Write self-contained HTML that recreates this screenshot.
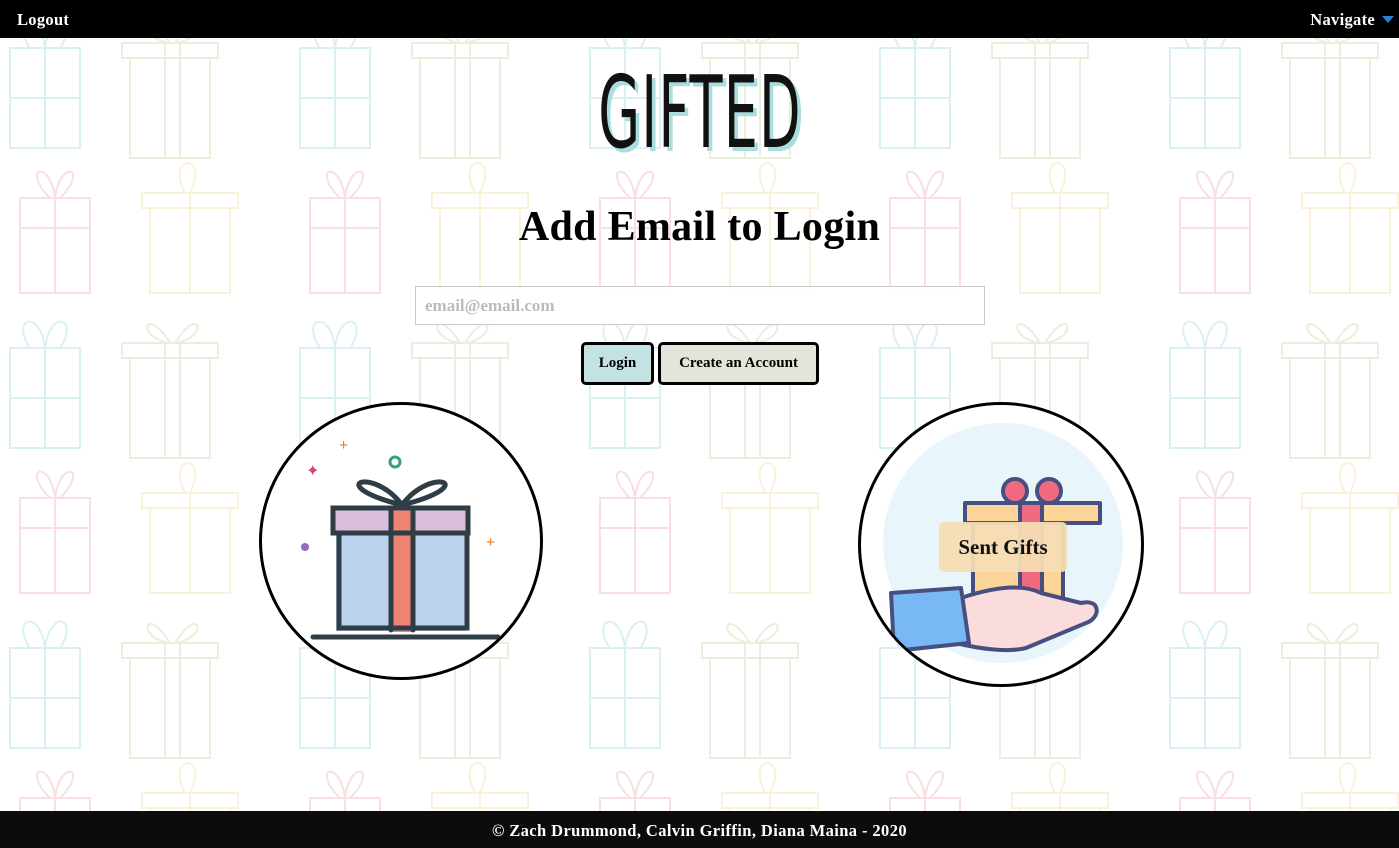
<!DOCTYPE html>
<html><head><meta charset="utf-8"><style>
*{margin:0;padding:0;box-sizing:border-box}
body{width:1399px;height:848px;overflow:hidden;position:relative;background:#fff;font-family:"Liberation Serif",serif}
.bg{position:absolute;left:0;top:38px;width:1399px;height:773px}
.top{position:absolute;left:0;top:0;width:1399px;height:38px;background:#000;color:#fff;font-weight:bold;font-size:16.5px}
.top .l{position:absolute;left:17px;top:10px;letter-spacing:.3px}
.top .r{position:absolute;right:24px;top:10px;letter-spacing:.3px}
.tri{position:absolute;right:5px;top:16px;width:0;height:0;border-left:6px solid transparent;border-right:6px solid transparent;border-top:7px solid #2a7fd4}
.foot{position:absolute;left:0;top:811px;width:1399px;height:37px;background:#0c0c0c;color:#fff;font-weight:bold;font-size:16.5px;text-align:center;padding-top:10px;letter-spacing:.4px}
.logo{position:absolute;left:500px;top:58px;width:400px;text-align:center;font-family:"Liberation Sans Narrow","DejaVu Sans Condensed",sans-serif;font-size:100px;line-height:110px;color:#111;transform:scaleX(.6);letter-spacing:2px;text-shadow:6px 4px 0 #a9dde0}
h1{position:absolute;left:0;width:1399px;top:203px;text-align:center;font-size:42px;font-weight:bold;color:#000;letter-spacing:.3px}
.inp{position:absolute;left:415px;top:286px;width:570px;height:39px;border:1px solid #c9c9c9;background:rgba(255,255,255,.92);color:#bbb;font-size:17px;font-weight:bold;padding:9px 9px}
.btn{position:absolute;top:342px;height:43px;border:3px solid #000;border-radius:5px;font-size:15px;font-weight:bold;text-align:center;padding-top:10px}
.circ{position:absolute;border:3px solid #000;border-radius:50%;background:#fff;overflow:hidden}
</style></head><body>
<svg class="bg" viewBox="0 0 1399 773">
<defs><pattern id="p" width="290" height="300" patternUnits="userSpaceOnUse" x="-10" y="-40">
<g fill="none" stroke-width="2" opacity=".32">
<g stroke="#8fd0dc"><rect x="20" y="50" width="70" height="100"/><path d="M55 50v100M20 100h70M40 50c-20-30 10-40 15 0M70 50c20-30-10-40-15 0"/></g>
<g stroke="#b7cf8f"><rect x="140" y="60" width="80" height="100"/><rect x="132" y="45" width="96" height="15"/><path d="M175 45v115M190 45v115M180 45c-25-40-35-5 0 0M185 45c25-40 35-5 0 0"/></g>
<g stroke="#ec9aa0"><rect x="30" y="200" width="70" height="95"/><path d="M30 230h70M65 200v95M60 200c-30-30 0-40 5 0M70 200c30-30 0-40-5 0"/></g>
<g stroke="#f3d08a"><rect x="160" y="210" width="80" height="85"/><rect x="152" y="195" width="96" height="15"/><path d="M200 195v100M195 195c-20-40 25-40 5 0"/></g>
</g></pattern></defs>
<rect width="1399" height="773" fill="url(#p)"/>
</svg>
<div class="top"><span class="l">Logout</span><span class="r">Navigate</span><span class="tri"></span></div>
<div class="logo">GIFTED</div>
<h1>Add Email to Login</h1>
<div class="inp">email@email.com</div>
<div class="btn" style="left:581px;width:73px;background:#c3e3e3">Login</div>
<div class="btn" style="left:658px;width:161px;background:#e2e6da">Create an Account</div>

<div class="circ" style="left:259px;top:402px;width:284px;height:278px">
<svg width="284" height="278" viewBox="259 402 284 278">
<g fill="none" stroke="#2f3e46" stroke-width="5" stroke-linecap="round">
<rect x="333" y="510" width="130" height="118" fill="#bcd3ee" stroke="none"/>
<rect x="332" y="505" width="135" height="25" fill="#d9bfdc" stroke="none"/>
<rect x="390" y="505" width="20" height="124" fill="#ee8474" stroke="none"/>
<path d="M336 530v95h128v-95M330 505h135v25h-135zM388 507v120M410 507v120M399 502c-30-40-80-20 0 0M399 502c30-40 80-20 0 0M310 634h185"/>
</g>
<circle cx="392" cy="459" r="5" fill="none" stroke="#3aa07a" stroke-width="3"/>
<circle cx="302" cy="544" r="4" fill="#9b6bb5"/>
<text x="336" y="447" fill="#f07a2a" font-size="16" font-weight="bold">+</text>
<text x="483" y="544" fill="#f07a2a" font-size="16" font-weight="bold">+</text>
<text x="303" y="473" fill="#d2486a" font-size="16">✦</text>
</svg></div>

<div class="circ" style="left:858px;top:402px;width:286px;height:285px">
<svg width="286" height="285" viewBox="858 402 286 285">
<circle cx="1000" cy="540" r="120" fill="#e8f5fb"/>
<g stroke="#474f80" stroke-width="4" stroke-linejoin="round">
<rect x="970" y="520" width="90" height="95" fill="#fbd49a"/>
<rect x="962" y="500" width="135" height="20" fill="#fbd49a"/>
<rect x="1017" y="500" width="22" height="120" fill="#f06a80"/>
<circle cx="1012" cy="488" r="12" fill="#f06a80"/><circle cx="1046" cy="488" r="12" fill="#f06a80"/>
<path d="M958 595c30-10 60-15 80-5l40 10c20-5 20 15 5 20l-60 25c-20 5-50 0-70-5z" fill="#fbdcdc"/>
<path d="M888 590l70-5 8 55-75 8z" fill="#78b8f4"/>
</g>
<rect x="936" y="519" width="128" height="50" rx="5" fill="#f6ddb4" opacity=".95"/>
<text x="1000" y="551" text-anchor="middle" font-family="Liberation Serif,serif" font-weight="bold" font-size="21" fill="#111">Sent Gifts</text>
</svg></div>

<div class="foot">© Zach Drummond, Calvin Griffin, Diana Maina - 2020</div>
</body></html>
